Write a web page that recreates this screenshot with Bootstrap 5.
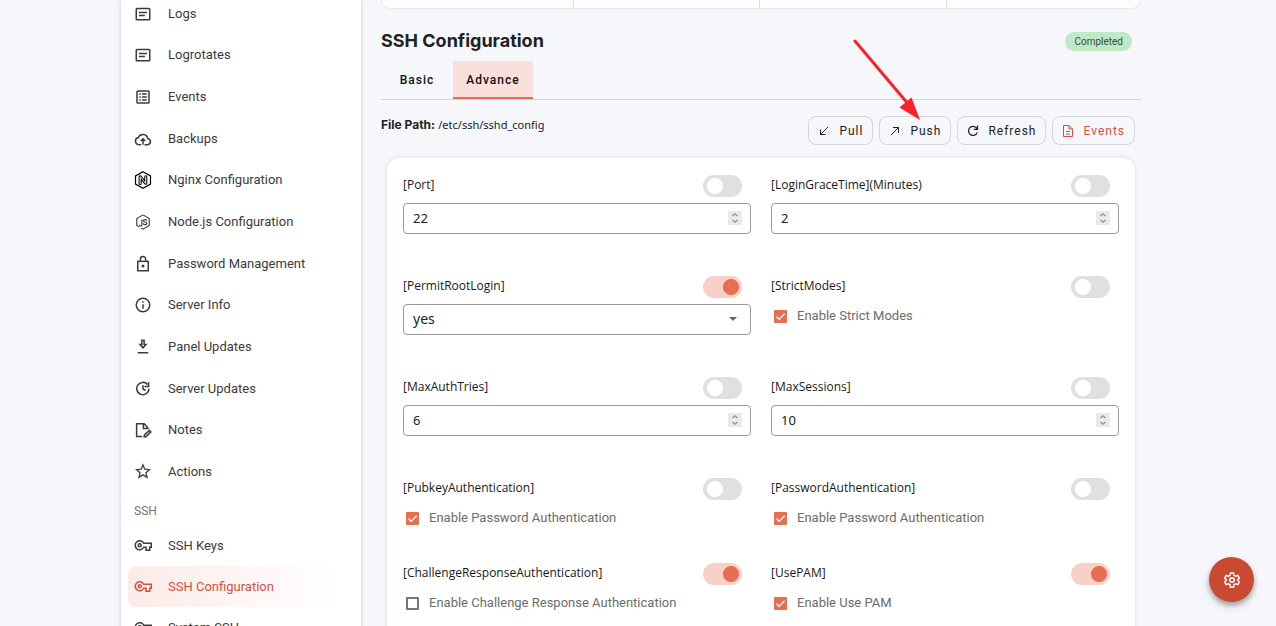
<!DOCTYPE html>
<html lang="en">
<head>
<meta charset="utf-8">
<meta name="viewport" content="width=device-width, initial-scale=1">
<title>SSH Configuration</title>
<link href="https://cdn.jsdelivr.net/npm/bootstrap@5.3.0/dist/css/bootstrap.min.css" rel="stylesheet">
<style>
  :root { --accent: #e76f51; --accent-dark: #d3503f; --accent-soft: #f8d0c8; }
  body { background: #f5f7fb; color: #202124; font: 13px/20px Roboto, sans-serif; overflow: hidden; height: 100vh; }
  .shell { max-width: 1020px; }
  .page-gutter { padding-right: 14px; }

  .side { width: 240px; background: #fff; box-shadow: 0 0 4px rgba(60, 60, 90, .22); padding: 0 7px; min-height: 100vh; }
  .side-main { display: grid; grid-auto-rows: 1fr; height: 500px; margin-top: -7px; }
  .side a { color: #3b3b3b; padding-left: 6px; gap: 16px; height: 100%; min-height: 41px; border-radius: 8px; }
  .side svg { width: 18px; height: 18px; flex: none; }
  .side-title { font-size: 12px; line-height: 37px; height: 32px; padding-left: 6px; color: #757575; }
  .side a.current { color: var(--accent-dark); background: linear-gradient(90deg, #fcebe8, #fff 93%); }

  .ico { fill: none; stroke: currentColor; stroke-width: 2; }
  .main-pane { margin-left: 20px; min-width: 0; }
  .stats { height: 9px; background: #fdfdfd; border: 1px solid #e6e7eb; border-top: 0; border-radius: 0 0 10px 10px; padding: 0 8px 0 5px; }
  .stats div + div { border-left: 1px solid #dcdde1; }
  h1 { font: 700 18px/24px Inter, sans-serif; }
  .status { background: #bfe8c4; color: #33523a; font-size: 10px; line-height: 19px; padding: 0 9px; margin-right: 9px; }

  .tabs { border-bottom: 1px solid #d3d5d8; }
  .tabs button { border: 0; background: none; color: #111; font-weight: 500; font-size: 12px; letter-spacing: 1px; width: 80px; height: 38px; border-bottom: 2px solid transparent; padding: 1px 0 0; }
  .tabs button:first-child { width: 72px; }
  .tabs button.active { background: #fae0db; border-bottom-color: var(--accent); }

  .path-row { margin-top: 15px; }
  .path-label { font: 700 12px/20px Inter, sans-serif; }
  .path-text { font: 11px/20px "Noto Sans", sans-serif; }
  .tools { gap: 6px; margin: 1px 6px 0 0; }
  .tool { border: 1px solid #d3d5d8; border-radius: 8px; background: none; height: 29px; padding: 0 9px; gap: 9px; font-size: 12px; letter-spacing: 1px; color: #222; }
  .tool svg { width: 12px; height: 12px; }
  .tool.danger { color: var(--accent-dark); }
  .pointer-arrow { position: absolute; right: 218px; top: 38px; z-index: 2; pointer-events: none; }

  .panel { background: #fff; border-radius: 12px; box-shadow: 0 0 4px rgba(60, 60, 90, .16); margin: 13px 6px 0; padding: 17px 16px; }
  .fields { display: grid; grid-template-columns: 1fr 1fr; column-gap: 20px; grid-auto-rows: 101px; }
  .fields-last { grid-auto-rows: 85px; }
  .field-name { font: 500 12px/20px "Open Sans", sans-serif; color: #181818; }
  .head-row { height: 28px; }
  .toggle.form-check-input { width: 39px; height: 22px; margin: 0 9px 0 0; border: 0; border-radius: 12px; box-shadow: none; background: radial-gradient(circle at 12px 50%, #fff 7.5px, transparent 8.5px) no-repeat, #e0e0e0; }
  .toggle.form-check-input:checked { background: radial-gradient(circle at 28px 50%, var(--accent) 7.5px, transparent 8.5px) no-repeat, var(--accent-soft); }
  .box.form-control, .box.form-select { height: 31px; border: 1px solid #999a9d; border-radius: 4px; padding: 0 9px 1px; font: 13px/20px "Noto Sans", sans-serif; color: #222; background-color: #fff; appearance: none; }
  .box.form-select { font-size: 14px; background-image: none; }
  .box[type=number] { -moz-appearance: textfield; appearance: textfield; }
  .box::-webkit-inner-spin-button { display: none; }
  .spin { position: absolute; right: 9px; top: 8px; width: 14px; height: 14px; background: #e9e9ed; pointer-events: none; }
  .caret { position: absolute; right: 14px; top: 13px; pointer-events: none; }
  .option { gap: 10px; padding: 2px 3px 0; color: #6c6c6c; }
  .option .form-check-input { width: 13px; height: 13px; margin: 0; border: 2px solid #757575; border-radius: 1px; }
  .option .form-check-input:checked { border-color: var(--accent); background: var(--accent) url("data:image/svg+xml,%3Csvg xmlns='http://www.w3.org/2000/svg' viewBox='0 0 9 9'%3E%3Cpath d='M.5 4.8 3.2 7.4 8.6 1.8' fill='none' stroke='white' stroke-width='1.3'/%3E%3C/svg%3E") center/9px no-repeat; }

  .settings { position: fixed; right: 22px; bottom: 24px; width: 45px; height: 45px; border: 0; background: #c94931; color: #fff; box-shadow: 0 3px 5px rgba(0, 0, 0, .28), 0 5px 10px rgba(0, 0, 0, .14); }
</style>
</head>
<body>
<svg class="d-none">
  <symbol id="i-article" viewBox="0 0 24 24"><rect x="3" y="4.500" width="18" height="15" rx="1"/><path d="M6.500 10h11M6.500 14h8"/></symbol>
  <symbol id="i-list" viewBox="0 0 24 24"><rect x="4" y="4" width="16" height="16" rx="1"/><path d="M7 8h2M7 12h2M7 16h2M10.600 8h6.400M10.600 12h6.400M10.600 16h6.400"/></symbol>
  <symbol id="i-cloud" viewBox="0 0 24 24"><path d="M9.500 19.500H6.500a4.800 4.800 0 0 1-.7-9.500 6.600 6.600 0 0 1 12.500 1.400A4.100 4.100 0 0 1 18.500 19.500H14M12 19.500v-7M9 14.700l3-3 3 3"/></symbol>
  <symbol id="i-nginx" viewBox="0 0 24 24"><path stroke-width="1.600" d="M12 1l10 5.500v11L12 23 2 17.500v-11z"/><path stroke-width="1.400" d="M6.800 17V8.200C6.800 6.200 9 6 10 7.300l4.300 5.900V7.700q0-1.400 1.400-1.400t1.400 1.400v8.200c0 2-2 2.200-3 .9L9.600 10.900v5.700q0 1.400-1.400 1.400T6.800 16.600"/></symbol>
  <symbol id="i-node" viewBox="0 0 24 24"><path stroke-width="1.500" d="M12 2.500l8.300 4.800v9.400L12 21.500l-2.400-1.300M6.800 18.500l-3.100-1.800V7.300L12 2.500M10.500 8.500v7q0 1.700-1.600 1.700T7.300 15.700M17 10q-.5-1.200-2.200-1.200c-3 0-2.800 3 0 3.200s3.200 3.500 0 3.500q-2.300 0-2.500-1.700"/></symbol>
  <symbol id="i-lock" viewBox="0 0 24 24"><rect x="5" y="8.500" width="14" height="12.500"/><path d="M8.500 8V5.500a3.500 3.500 0 0 1 7 0V8"/><circle cx="12" cy="14.800" r="1"/></symbol>
  <symbol id="i-info" viewBox="0 0 24 24"><circle cx="12" cy="12" r="9"/><path d="M12 11v6M12 7v2"/></symbol>
  <symbol id="i-down" viewBox="0 0 24 24"><path d="M5 19.500h14M10.500 3v5.500H8l4 4.500 4-4.500h-2.500V3z"/></symbol>
  <symbol id="i-update" viewBox="0 0 24 24"><path d="M18 6A8.200 8.200 0 1 0 20 11.500M19.500 3v5.500H14M12 7v5l3.500 2"/></symbol>
  <symbol id="i-note" viewBox="0 0 24 24"><path d="M11 20.500H3.500V3.500h10l5 5.500v2M12.500 3.500V10H18.500M13.500 21l.5-2.500 6.500-6 2 2L16 21z"/></symbol>
  <symbol id="i-star" viewBox="0 0 24 24"><path stroke-width="1.700" d="M12 2.500l2.400 5.800 6.200.600-4.700 4.100 1.500 6.100-5.400-3.300-5.400 3.300 1.500-6.100-4.700-4.100 6.200-.600z"/></symbol>
  <symbol id="i-key" viewBox="0 0 24 24"><path d="M13 8.300a6 6 0 1 0 0 5.400H16V17.500h5V13.700H23V8.300z"/><circle cx="7.600" cy="11" r="2"/></symbol>
</svg>

<div class="page-gutter">
<div class="shell mx-auto d-flex">
  <nav class="side flex-shrink-0" aria-label="Server">
    <div class="side-main">
      <a href="#" class="d-flex align-items-center text-decoration-none"><svg class="ico"><use href="#i-article"/></svg>Logs</a>
      <a href="#" class="d-flex align-items-center text-decoration-none"><svg class="ico"><use href="#i-article"/></svg>Logrotates</a>
      <a href="#" class="d-flex align-items-center text-decoration-none"><svg class="ico"><use href="#i-list"/></svg>Events</a>
      <a href="#" class="d-flex align-items-center text-decoration-none"><svg class="ico"><use href="#i-cloud"/></svg>Backups</a>
      <a href="#" class="d-flex align-items-center text-decoration-none"><svg class="ico text-black"><use href="#i-nginx"/></svg>Nginx Configuration</a>
      <a href="#" class="d-flex align-items-center text-decoration-none"><svg class="ico"><use href="#i-node"/></svg>Node.js Configuration</a>
      <a href="#" class="d-flex align-items-center text-decoration-none"><svg class="ico"><use href="#i-lock"/></svg>Password Management</a>
      <a href="#" class="d-flex align-items-center text-decoration-none"><svg class="ico"><use href="#i-info"/></svg>Server Info</a>
      <a href="#" class="d-flex align-items-center text-decoration-none"><svg class="ico"><use href="#i-down"/></svg>Panel Updates</a>
      <a href="#" class="d-flex align-items-center text-decoration-none"><svg class="ico"><use href="#i-update"/></svg>Server Updates</a>
      <a href="#" class="d-flex align-items-center text-decoration-none"><svg class="ico"><use href="#i-note"/></svg>Notes</a>
      <a href="#" class="d-flex align-items-center text-decoration-none"><svg class="ico"><use href="#i-star"/></svg>Actions</a>
    </div>
    <div class="side-title">SSH</div>
    <div>
      <a href="#" class="d-flex align-items-center text-decoration-none"><svg class="ico"><use href="#i-key"/></svg>SSH Keys</a>
      <a href="#" class="current d-flex align-items-center text-decoration-none" aria-current="page"><svg class="ico"><use href="#i-key"/></svg>SSH Configuration</a>
      <a href="#" class="d-flex align-items-center text-decoration-none"><svg class="ico"><use href="#i-key"/></svg>System SSH</a>
    </div>
  </nav>

  <main class="main-pane flex-grow-1 position-relative">
    <div class="stats d-flex"><div class="flex-fill"></div><div class="flex-fill"></div><div class="flex-fill"></div><div class="flex-fill"></div></div>
    <div class="d-flex justify-content-between align-items-center mt-3 pt-1">
      <h1 class="mb-0">SSH Configuration</h1>
      <span class="status rounded-pill">Completed</span>
    </div>
    <div class="tabs d-flex mt-2" role="tablist">
      <button type="button" role="tab" aria-selected="false">Basic</button>
      <button type="button" role="tab" aria-selected="true" class="active">Advance</button>
    </div>
    <div class="path-row d-flex justify-content-between align-items-start">
      <div><span class="path-label">File Path:</span> <span class="path-text">/etc/ssh/sshd_config</span></div>
      <div class="tools d-flex">
        <button type="button" class="tool d-flex align-items-center"><svg class="ico" viewBox="0 0 24 24"><path d="M20 4L5 19M5 9v10h10"/></svg>Pull</button>
        <button type="button" class="tool d-flex align-items-center"><svg class="ico" viewBox="0 0 24 24"><path d="M4 20L19 5M8 5h11v11"/></svg>Push</button>
        <button type="button" class="tool d-flex align-items-center"><svg class="ico" viewBox="0 0 24 24"><path stroke-width="2.500" d="M20.500 15a9 9 0 1 1-2-9.500l2.500 2.500M21 1v7.500h-7.500"/></svg>Refresh</button>
        <button type="button" class="tool danger d-flex align-items-center"><svg class="ico" viewBox="0 0 24 24"><path d="M14 1H3v22h18V8zM14 1v7h7M8 13h8M8 18h8"/></svg>Events</button>
      </div>
    </div>
    <svg class="pointer-arrow" width="70" height="84" viewBox="0 0 70 84" aria-hidden="true"><path d="M2 3L56 67" stroke="#ff1f2a" stroke-width="3" stroke-linecap="round"/><path d="M67 82L46.500 69.500 58.500 59.500z" fill="#ff1f2a"/></svg>

    <form class="panel">
      <div class="fields">
        <div>
          <div class="head-row d-flex justify-content-between align-items-start"><label class="field-name" for="port">[Port]</label><input class="toggle form-check-input" type="checkbox" role="switch" aria-label="Port"></div>
          <div class="position-relative"><input id="port" class="box form-control" type="number" value="22"><svg class="spin" viewBox="0 0 14 14"><path d="M4.500 5L7 2.800 9.500 5M4.500 9L7 11.200 9.500 9" fill="none" stroke="#8f8f9d" stroke-width="1.300"/></svg></div>
        </div>
        <div>
          <div class="head-row d-flex justify-content-between align-items-start"><label class="field-name" for="grace">[LoginGraceTime](Minutes)</label><input class="toggle form-check-input" type="checkbox" role="switch" aria-label="LoginGraceTime"></div>
          <div class="position-relative"><input id="grace" class="box form-control" type="number" value="2"><svg class="spin" viewBox="0 0 14 14"><path d="M4.500 5L7 2.800 9.500 5M4.500 9L7 11.200 9.500 9" fill="none" stroke="#8f8f9d" stroke-width="1.300"/></svg></div>
        </div>
        <div>
          <div class="head-row d-flex justify-content-between align-items-start"><label class="field-name" for="root">[PermitRootLogin]</label><input class="toggle form-check-input" type="checkbox" role="switch" aria-label="PermitRootLogin" checked></div>
          <div class="position-relative"><select id="root" class="box form-select"><option>yes</option><option>no</option></select><svg class="caret" width="8" height="4" viewBox="0 0 8 4"><path d="M0 0h8L4 4z" fill="#666"/></svg></div>
        </div>
        <div>
          <div class="head-row d-flex justify-content-between align-items-start"><span class="field-name">[StrictModes]</span><input class="toggle form-check-input" type="checkbox" role="switch" aria-label="StrictModes"></div>
          <label class="option d-flex align-items-center"><input class="form-check-input" type="checkbox" checked>Enable Strict Modes</label>
        </div>
        <div>
          <div class="head-row d-flex justify-content-between align-items-start"><label class="field-name" for="tries">[MaxAuthTries]</label><input class="toggle form-check-input" type="checkbox" role="switch" aria-label="MaxAuthTries"></div>
          <div class="position-relative"><input id="tries" class="box form-control" type="number" value="6"><svg class="spin" viewBox="0 0 14 14"><path d="M4.500 5L7 2.800 9.500 5M4.500 9L7 11.200 9.500 9" fill="none" stroke="#8f8f9d" stroke-width="1.300"/></svg></div>
        </div>
        <div>
          <div class="head-row d-flex justify-content-between align-items-start"><label class="field-name" for="sessions">[MaxSessions]</label><input class="toggle form-check-input" type="checkbox" role="switch" aria-label="MaxSessions"></div>
          <div class="position-relative"><input id="sessions" class="box form-control" type="number" value="10"><svg class="spin" viewBox="0 0 14 14"><path d="M4.500 5L7 2.800 9.500 5M4.500 9L7 11.200 9.500 9" fill="none" stroke="#8f8f9d" stroke-width="1.300"/></svg></div>
        </div>
      </div>
      <div class="fields fields-last">
        <div>
          <div class="head-row d-flex justify-content-between align-items-start"><span class="field-name">[PubkeyAuthentication]</span><input class="toggle form-check-input" type="checkbox" role="switch" aria-label="PubkeyAuthentication"></div>
          <label class="option d-flex align-items-center"><input class="form-check-input" type="checkbox" checked>Enable Password Authentication</label>
        </div>
        <div>
          <div class="head-row d-flex justify-content-between align-items-start"><span class="field-name">[PasswordAuthentication]</span><input class="toggle form-check-input" type="checkbox" role="switch" aria-label="PasswordAuthentication"></div>
          <label class="option d-flex align-items-center"><input class="form-check-input" type="checkbox" checked>Enable Password Authentication</label>
        </div>
        <div>
          <div class="head-row d-flex justify-content-between align-items-start"><span class="field-name">[ChallengeResponseAuthentication]</span><input class="toggle form-check-input" type="checkbox" role="switch" aria-label="ChallengeResponseAuthentication" checked></div>
          <label class="option d-flex align-items-center"><input class="form-check-input" type="checkbox">Enable Challenge Response Authentication</label>
        </div>
        <div>
          <div class="head-row d-flex justify-content-between align-items-start"><span class="field-name">[UsePAM]</span><input class="toggle form-check-input" type="checkbox" role="switch" aria-label="UsePAM" checked></div>
          <label class="option d-flex align-items-center"><input class="form-check-input" type="checkbox" checked>Enable Use PAM</label>
        </div>
      </div>
    </form>
  </main>
</div>
</div>

<button type="button" class="settings rounded-circle d-flex align-items-center justify-content-center" aria-label="Settings">
  <svg class="ico" width="18" height="18" viewBox="0 0 24 24"><path d="M10 2.500h4l.700 3.300 2 1.200 3.100-1 2 3.500L19.400 12l2.400 2.500-2 3.500-3.100-1-2 1.200-.700 3.300h-4l-.700-3.300-2-1.200-3.100 1-2-3.500L4.600 12 2.200 9.500l2-3.500 3.100 1 2-1.200z"/><circle cx="12" cy="12" r="3"/></svg>
</button>
<script src="https://cdn.jsdelivr.net/npm/bootstrap@5.3.0/dist/js/bootstrap.bundle.min.js"></script>
</body>
</html>
